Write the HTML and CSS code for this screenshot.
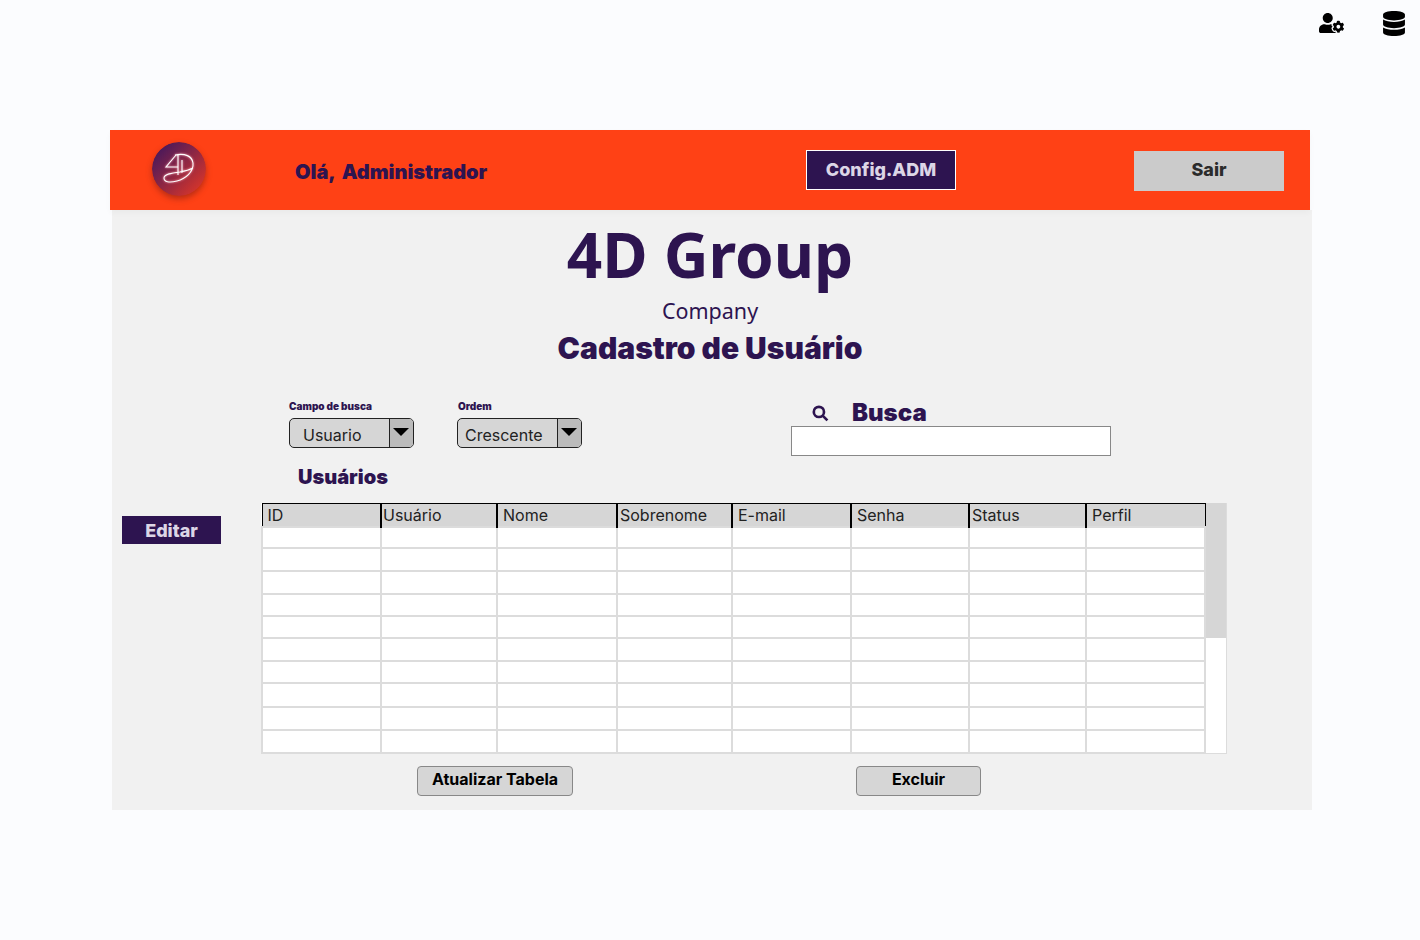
FILE: index.html
```html
<!DOCTYPE html>
<html>
  <head>
    <meta charset="UTF-8" />
    <title>Cadastro de Usuário</title>
    <link rel="stylesheet" href="styles.css">
  </head>
  <body>
    <div class="toolbar">
      <svg class="icon-user" viewBox="0 0 640 512"><path d="M610.5 373.3c2.6-14.1 2.6-28.5 0-42.6l25.8-14.9c3-1.7 4.3-5.2 3.3-8.5-6.7-21.6-18.2-41.2-33.2-57.4-2.3-2.5-6-3.1-9-1.4l-25.8 14.9c-10.9-9.3-23.4-16.5-36.9-21.3v-29.8c0-3.4-2.4-6.4-5.7-7.1-22.3-5-45-4.8-66.2 0-3.3.7-5.7 3.7-5.7 7.1v29.8c-13.5 4.8-26 12-36.9 21.3l-25.8-14.9c-2.9-1.7-6.7-1.1-9 1.4-15 16.2-26.5 35.8-33.2 57.4-1 3.3.4 6.8 3.3 8.5l25.8 14.9c-2.6 14.1-2.6 28.5 0 42.6l-25.8 14.9c-3 1.7-4.3 5.2-3.3 8.5 6.7 21.6 18.2 41.1 33.2 57.4 2.3 2.5 6 3.1 9 1.4l25.8-14.9c10.9 9.3 23.4 16.5 36.9 21.3v29.8c0 3.4 2.4 6.4 5.7 7.1 22.3 5 45 4.8 66.2 0 3.3-.7 5.7-3.7 5.7-7.1v-29.8c13.5-4.8 26-12 36.9-21.3l25.8 14.9c2.9 1.7 6.7 1.1 9-1.4 15-16.2 26.5-35.8 33.2-57.4 1-3.3-.4-6.8-3.3-8.5l-25.8-14.9zM496 400.5c-26.8 0-48.5-21.8-48.5-48.5s21.8-48.5 48.5-48.5 48.5 21.8 48.5 48.5-21.7 48.5-48.5 48.5zM224 256c70.7 0 128-57.3 128-128S294.7 0 224 0 96 57.3 96 128s57.3 128 128 128zm201.2 226.5c-2.3-1.2-4.6-2.6-6.8-3.9l-7.9 4.6c-6 3.4-12.8 5.3-19.6 5.3-10.9 0-21.4-4.6-28.9-12.6-18.3-19.8-32.3-43.9-40.2-69.6-5.5-17.7 1.9-36.4 17.9-45.7l7.9-4.6c-.1-2.6-.1-5.2 0-7.8l-7.9-4.6c-16-9.2-23.4-28-17.9-45.7.9-2.9 2.2-5.8 3.2-8.7-3.8-.3-7.5-1.2-11.4-1.2h-16.7c-22.2 10.2-46.9 16-72.9 16s-50.6-5.8-72.9-16h-16.7C60.2 288 0 348.2 0 422.4V464c0 26.5 21.5 48 48 48h352c10.1 0 19.5-3.2 27.2-8.5-1.2-3.8-2-7.7-2-11.8v-9.2z"/></svg>
      <svg class="icon-db" viewBox="0 0 448 512"><path d="M448 73.143v45.714C448 159.143 347.667 192 224 192S0 159.143 0 118.857V73.143C0 32.857 100.333 0 224 0s224 32.857 224 73.143zM448 176v102.857C448 319.143 347.667 352 224 352S0 319.143 0 278.857V176c48.125 33.143 136.208 48.572 224 48.572S399.874 209.143 448 176zm0 160v102.857C448 479.143 347.667 512 224 512S0 479.143 0 438.857V336c48.125 33.143 136.208 48.572 224 48.572S399.874 369.143 448 336z"/></svg>
    </div>

    <header class="topbar">
      <div class="logo-cell">
        <svg class="logo" viewBox="0 0 54 54">
          <defs>
            <linearGradient id="logoFill" x1="0.1" y1="0.1" x2="0.9" y2="0.9">
              <stop offset="0" stop-color="#45185c" />
              <stop offset="1" stop-color="#d8352a" />
            </linearGradient>
          </defs>
          <circle cx="27" cy="27" r="27" fill="url(#logoFill)" />
          <path class="logo-mark" d="M24 13 L14 25 L26 25 M26 13 V33 M30 18 V31 M23 13 C33 11 40 14 41 21 C42 30 33 37 25 39 C17 41 12 40 12 36 C12 32 20 31 28 30 C33 29 37 28 41 26" />
        </svg>
      </div>
      <div class="greeting">Olá, Administrador</div>
      <a class="btn-config">Config.ADM</a>
      <a class="btn-sair">Sair</a>
    </header>

    <main class="panel">
      <div class="titles">
        <h1>4D Group</h1>
        <p class="subtitle">Company</p>
        <h2>Cadastro de Usuário</h2>
      </div>

      <section class="filters">
        <div class="filter filter-campo">
          <label>Campo de busca</label>
          <div class="select select-usuario">
            <span class="select-value">Usuario</span>
            <span class="select-arrow"></span>
          </div>
        </div>
        <div class="filter filter-ordem">
          <label>Ordem</label>
          <div class="select">
            <span class="select-value">Crescente</span>
            <span class="select-arrow"></span>
          </div>
        </div>
        <div class="search">
          <div class="search-title">
            <svg class="icon-search" viewBox="0 0 16 16"><circle cx="6.500" cy="6.500" r="4.800" /><path d="M10 10 L14.500 14.500" /></svg>
            <span>Busca</span>
          </div>
          <input class="search-input" type="text" />
        </div>
      </section>

      <h3>Usuários</h3>

      <section class="data">
        <a class="btn-editar">Editar</a>
        <div class="table-wrap">
          <table>
            <colgroup>
              <col class="c1" /><col class="c2" /><col class="c3" /><col class="c4" />
              <col class="c5" /><col class="c6" /><col class="c7" /><col class="c8" />
            </colgroup>
            <thead>
              <tr><th>ID</th><th>Usuário</th><th>Nome</th><th>Sobrenome</th><th>E-mail</th><th>Senha</th><th>Status</th><th>Perfil</th></tr>
            </thead>
            <tbody>
              <tr><td></td><td></td><td></td><td></td><td></td><td></td><td></td><td></td></tr>
              <tr><td></td><td></td><td></td><td></td><td></td><td></td><td></td><td></td></tr>
              <tr><td></td><td></td><td></td><td></td><td></td><td></td><td></td><td></td></tr>
              <tr><td></td><td></td><td></td><td></td><td></td><td></td><td></td><td></td></tr>
              <tr><td></td><td></td><td></td><td></td><td></td><td></td><td></td><td></td></tr>
              <tr><td></td><td></td><td></td><td></td><td></td><td></td><td></td><td></td></tr>
              <tr><td></td><td></td><td></td><td></td><td></td><td></td><td></td><td></td></tr>
              <tr><td></td><td></td><td></td><td></td><td></td><td></td><td></td><td></td></tr>
              <tr><td></td><td></td><td></td><td></td><td></td><td></td><td></td><td></td></tr>
              <tr><td></td><td></td><td></td><td></td><td></td><td></td><td></td><td></td></tr>
            </tbody>
          </table>
          <div class="scrollbar"><div class="scroll-thumb"></div></div>
        </div>
      </section>

      <section class="actions">
        <button class="btn-atualizar">Atualizar Tabela</button>
        <button class="btn-excluir">Excluir</button>
      </section>
    </main>
  </body>
</html>
```

FILE: styles.css
```css
* {
  box-sizing: border-box;
}
body {
  margin: 0;
  background: #fbfcfe;
  color: #2d1450;
  font-family: Inter, sans-serif;
}
.toolbar {
  height: 130px;
  display: flex;
  justify-content: flex-end;
  align-items: flex-start;
  padding: 11px 15px 0 0;
}
.icon-user {
  width: 25px;
  height: 20px;
  margin: 2px 39px 0 0;
}
.icon-db {
  width: 22px;
  height: 25px;
}
.topbar {
  width: 1200px;
  height: 80px;
  margin-left: 110px;
  background: #ff4115;
  display: grid;
  grid-template-columns: 185px 511px 328px 150px;
  align-items: center;
  box-shadow: 0 3px 6px rgba(0, 0, 0, 0.03);
  position: relative;
}
.logo-cell {
  padding-left: 41px;
  display: flex;
}
.logo {
  width: 56px;
  height: 56px;
  padding: 1px;
  border-radius: 50%;
  margin-top: -2px;
  filter: drop-shadow(0 3px 3px rgba(90, 20, 20, 0.45));
}
.logo-mark {
  fill: none;
  stroke: #fff;
  stroke-width: 1.1;
  filter: drop-shadow(0 0 1px #ffb0c0);
}
.greeting {
  font-size: 20px;
  font-weight: 900;
  word-spacing: 3px;
  margin-top: 3px;
}
.btn-config {
  width: 150px;
  height: 40px;
  background: #2d1450;
  border: 1px solid #fff;
  color: #dcd6e6;
  font-size: 18px;
  font-weight: 800;
  display: flex;
  align-items: center;
  justify-content: center;
  padding-bottom: 2px;
}
.btn-sair {
  width: 150px;
  height: 40px;
  margin-top: 1px;
  background: #cbcbcb;
  color: #2b2b2b;
  font-size: 18px;
  font-weight: 800;
  display: flex;
  align-items: center;
  justify-content: center;
  padding-bottom: 3px;
}
.panel {
  width: 1200px;
  height: 600px;
  margin-left: 112px;
  background: #f1f1f1;
}
.titles {
  width: 1196px;
  height: 162px;
  text-align: center;
}
h1 {
  margin: 0;
  padding-top: 2px;
  font-family: "Noto Sans", sans-serif;
  font-size: 62px;
  font-weight: 700;
  line-height: 85px;
}
.subtitle {
  margin: 0;
  font-family: "Noto Sans", sans-serif;
  font-size: 21.500px;
  line-height: 28px;
}
h2 {
  margin: 0;
  padding-top: 5px;
  font-size: 30px;
  font-weight: 900;
  line-height: 36px;
}
.filters {
  display: flex;
  align-items: flex-start;
  margin-top: 28px;
  padding-left: 177px;
}
.filter {
  width: 125px;
}
.filter-ordem {
  margin-left: 43px;
}
.filter label {
  display: block;
  font-size: 10px;
  font-weight: 900;
  line-height: 12px;
  margin-bottom: 6px;
}
.filter-ordem label {
  padding-left: 1px;
}
.select {
  height: 30px;
  display: flex;
  border: 1px solid #222;
  border-radius: 5px;
  background: #d6d6d6;
  overflow: hidden;
}
.select-value {
  flex: 1;
  padding: 5px 0 0 7px;
  font-size: 16px;
  line-height: 22px;
  color: #222;
}
.select-usuario .select-value {
  padding-left: 13px;
}
.select-arrow {
  width: 24px;
  background: #bbb;
  border-left: 1px solid #222;
  display: flex;
  align-items: center;
  justify-content: center;
  padding-right: 1px;
}
.select-arrow::after {
  content: "";
  border-left: 8px solid transparent;
  border-right: 8px solid transparent;
  border-top: 8px solid #000;
  margin-top: -3px;
}
.search {
  width: 320px;
  margin-left: 209px;
}
.search-title {
  height: 26px;
  display: flex;
  align-items: center;
  padding-left: 21px;
  font-size: 24px;
  font-weight: 900;
  line-height: 26px;
}
.icon-search {
  width: 17px;
  height: 17px;
  margin-right: 23px;
  fill: none;
  stroke: #2d1450;
  stroke-width: 2.500;
}
.search-input {
  display: block;
  width: 320px;
  height: 30px;
  border: 1px solid #888;
  background: #fff;
  margin: 0;
}
h3 {
  margin: 8px 0 0 186px;
  font-size: 20px;
  font-weight: 900;
  line-height: 26px;
}
.data {
  display: flex;
  align-items: flex-start;
  margin-top: 13px;
  padding-left: 10px;
}
.btn-editar {
  width: 99px;
  height: 28px;
  margin-top: 13px;
  padding-top: 1px;
  background: #2d1450;
  color: #dcd6e6;
  font-size: 18px;
  font-weight: 800;
  line-height: 28px;
  text-align: center;
}
.table-wrap {
  display: flex;
  margin-left: 40px;
}
table {
  width: 943px;
  table-layout: fixed;
  border-collapse: collapse;
  background: #fff;
}
.c1 { width: 119px; }
.c2 { width: 116px; }
.c3 { width: 120px; }
.c4 { width: 115px; }
.c5 { width: 119px; }
.c6 { width: 118px; }
.c7 { width: 117px; }
.c8 { width: 119px; }
th {
  height: 23px;
  padding: 1px 0 0 5px;
  background: #d6d6d6;
  border: 1px solid #000;
  font-size: 16px;
  font-weight: 400;
  line-height: 20px;
  color: #222;
  text-align: left;
}
th + th {
  border-left-width: 2px;
}
th:nth-child(2) {
  padding-left: 1px;
}
th:nth-child(4),
th:nth-child(7) {
  padding-left: 2px;
}
td {
  height: 23px;
  padding: 0;
  border: 2px solid #dcdcdc;
}
tbody tr:nth-child(1) td {
  height: 21px;
}
tbody tr:nth-child(4) td,
tbody tr:nth-child(5) td,
tbody tr:nth-child(7) td {
  height: 22px;
}
tbody tr:nth-child(8) td {
  height: 24px;
}
.scrollbar {
  width: 21px;
  background: #fff;
  border-right: 1px solid #dcdcdc;
  border-bottom: 1px solid #dcdcdc;
}
.scroll-thumb {
  height: 135px;
  background: #d6d6d6;
}
.actions {
  display: flex;
  align-items: flex-start;
  margin-top: 12px;
  padding-left: 305px;
}
.actions button {
  height: 30px;
  padding: 0 0 3px;
  background: #d6d6d6;
  border: 1px solid #888;
  border-radius: 4px;
  color: #000;
  font-family: Inter, sans-serif;
  font-size: 16px;
  font-weight: 700;
}
.btn-atualizar {
  width: 156px;
}
.btn-excluir {
  width: 125px;
  margin-left: 283px;
}
```
